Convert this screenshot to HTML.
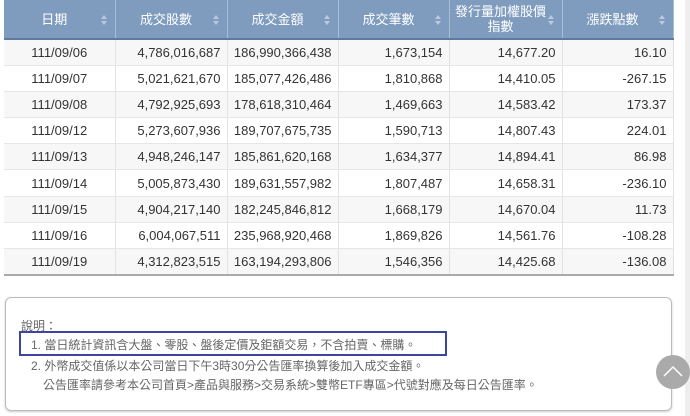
<!DOCTYPE html>
<html><head><meta charset="utf-8"><style>
body{margin:0;width:690px;height:416px;background:#fff;font-family:"Liberation Sans","Noto Sans CJK TC",sans-serif;position:relative;overflow:hidden}
table{position:absolute;left:4px;top:0;width:669px;border-collapse:collapse;table-layout:fixed;font-size:13px;color:#333}
th{background:#7f9cbf;color:#fff;font-weight:normal;height:38px;border-right:1px solid #a9bdd4;border-bottom:2px solid #5d7b9c;position:relative;line-height:15px;padding:0 14px 0 4px}
th:after{content:"";position:absolute;right:8px;top:15px;width:0;height:0;border:3px solid transparent;border-bottom:4px solid #b9cbe0;border-top:none}
th:before{content:"";position:absolute;right:8px;top:21px;width:0;height:0;border:3px solid transparent;border-top:4px solid #b9cbe0;border-bottom:none}
td{height:25.1px;border-right:1px solid #e3e3e3;border-bottom:1px solid #e6e6e6;text-align:right;padding:0 6px}
td:first-child{text-align:center}
tr:nth-child(even) td{background:#f7f7f7}
tr:last-child td{border-bottom:2px solid #aaa}
.sb{position:absolute;left:685px;top:0;width:5px;height:416px;background:#eee}
.box{position:absolute;left:5px;top:297px;width:665px;height:112px;border:1px solid #bbb;border-radius:6px;box-shadow:0 1px 2px #ccc;font-size:12px;color:#666}
.box div{position:absolute;white-space:nowrap}
.hl{position:absolute;left:13px;top:33px;width:424px;height:21px;border:2px solid #3c45a0}
.up{position:absolute;left:656px;top:355px;width:34px;height:34px;border-radius:50%;background:#aaa}
</style></head><body>
<table>
<colgroup><col style="width:111px"><col style="width:112px"><col style="width:111px"><col style="width:111px"><col style="width:113px"><col style="width:111px"></colgroup>
<tr><th>日期</th><th>成交股數</th><th>成交金額</th><th>成交筆數</th><th>發行量加權股價<br>指數</th><th>漲跌點數</th></tr>
<tr><td>111/09/06</td><td>4,786,016,687</td><td>186,990,366,438</td><td>1,673,154</td><td>14,677.20</td><td>16.10</td></tr>
<tr><td>111/09/07</td><td>5,021,621,670</td><td>185,077,426,486</td><td>1,810,868</td><td>14,410.05</td><td>-267.15</td></tr>
<tr><td>111/09/08</td><td>4,792,925,693</td><td>178,618,310,464</td><td>1,469,663</td><td>14,583.42</td><td>173.37</td></tr>
<tr><td>111/09/12</td><td>5,273,607,936</td><td>189,707,675,735</td><td>1,590,713</td><td>14,807.43</td><td>224.01</td></tr>
<tr><td>111/09/13</td><td>4,948,246,147</td><td>185,861,620,168</td><td>1,634,377</td><td>14,894.41</td><td>86.98</td></tr>
<tr><td>111/09/14</td><td>5,005,873,430</td><td>189,631,557,982</td><td>1,807,487</td><td>14,658.31</td><td>-236.10</td></tr>
<tr><td>111/09/15</td><td>4,904,217,140</td><td>182,245,846,812</td><td>1,668,179</td><td>14,670.04</td><td>11.73</td></tr>
<tr><td>111/09/16</td><td>6,004,067,511</td><td>235,968,920,468</td><td>1,869,826</td><td>14,561.76</td><td>-108.28</td></tr>
<tr><td>111/09/19</td><td>4,312,823,515</td><td>163,194,293,806</td><td>1,546,356</td><td>14,425.68</td><td>-136.08</td></tr>
</table>
<div class="sb"></div>
<div class="box">
<div style="left:15px;top:19px">說明：</div>
<div class="hl"></div>
<div style="left:25px;top:38px">1. 當日統計資訊含大盤、零股、盤後定價及鉅額交易，不含拍賣、標購。</div>
<div style="left:25px;top:59px">2. 外幣成交值係以本公司當日下午3時30分公告匯率換算後加入成交金額。</div>
<div style="left:37px;top:78px">公告匯率請參考本公司首頁&gt;產品與服務&gt;交易系統&gt;雙幣ETF專區&gt;代號對應及每日公告匯率。</div>
</div>
<div class="up"><svg width="34" height="34"><path d="M8 21 L17 12 L26 21" fill="none" stroke="#fff" stroke-width="1.5"/></svg></div>
</body></html>
